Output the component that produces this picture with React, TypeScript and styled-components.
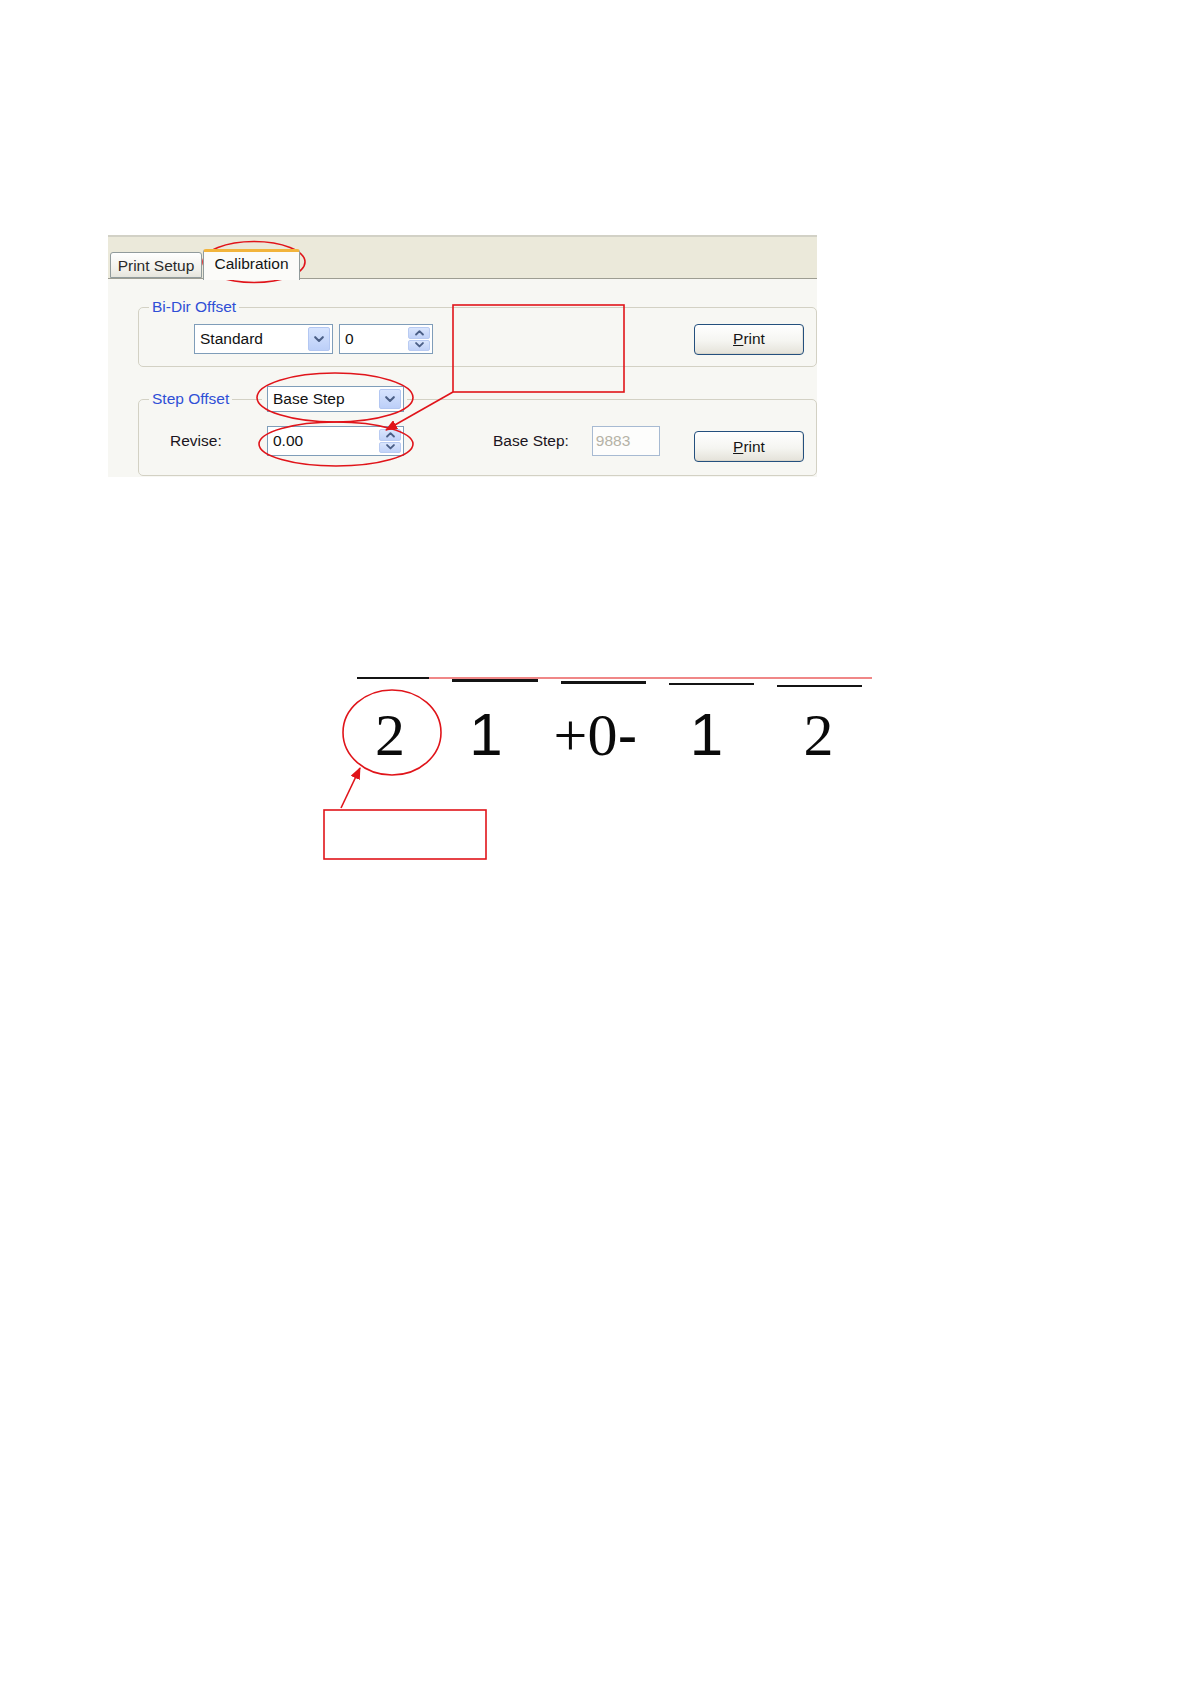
import React from "react";
import styled, { createGlobalStyle } from "styled-components";

const Global = createGlobalStyle`
  html, body { margin: 0; padding: 0; background: #ffffff; }
  body { font-family: "Liberation Sans", Arial, sans-serif; }
`;

const Page = styled.div`
  position: relative;
  width: 1191px;
  height: 1684px;
  box-sizing: border-box;
  padding-top: 235px;
  background: #ffffff;
  overflow: hidden;
`;

/* ---------- dialog screenshot ---------- */

const Window = styled.div`
  margin-left: 108px;
  width: 709px;
  background: #f7f7f3;
  font-family: "Liberation Sans", Arial, sans-serif;
  font-size: 15.5px;
  color: #151515;
`;

const TabStrip = styled.div`
  display: flex;
  align-items: flex-end;
  height: 41px;
  padding-left: 2px;
  background: #ebe9da;
  border-top: 2px solid #d2d1c6;
  border-bottom: 1px solid #9d9d92;
`;

const Tab = styled.div<{ $active?: boolean }>`
  position: relative;
  z-index: ${(p) => (p.$active ? 1 : 0)};
  box-sizing: border-box;
  display: flex;
  align-items: center;
  justify-content: center;
  width: ${(p) => (p.$active ? 97 : 92)}px;
  height: ${(p) => (p.$active ? 31 : 26)}px;
  margin-left: ${(p) => (p.$active ? 1 : 0)}px;
  margin-bottom: ${(p) => (p.$active ? -2 : 0)}px;
  padding-top: ${(p) => (p.$active ? 0 : 1)}px;
  padding-bottom: ${(p) => (p.$active ? 4 : 0)}px;
  border: 1px solid #919b9c;
  border-top: ${(p) => (p.$active ? "3px solid #f2b43c" : "1px solid #919b9c")};
  border-bottom: ${(p) => (p.$active ? "none" : "1px solid #919b9c")};
  border-radius: 3px 3px 0 0;
  background: ${(p) =>
    p.$active ? "#fbfbf9" : "linear-gradient(#ffffff, #f1f0ea 70%, #e6e5dc)"};
  color: ${(p) => (p.$active ? "#151515" : "#2a2a2a")};
  white-space: nowrap;
`;

const TabPage = styled.div`
  padding: 19px 0 1px 30px;
`;

const Group = styled.fieldset<{ $pt: number; $pb: number }>`
  margin: 0;
  min-width: 0;
  padding: ${(p) => p.$pt}px 0 ${(p) => p.$pb}px 0;
  border: 1px solid #d3d1c4;
  border-radius: 5px;
  & + & {
    margin-top: 19px;
  }
`;

const Legend = styled.legend`
  margin-left: 10px;
  padding: 0 3px;
  line-height: 18px;
`;

const LegendInner = styled.span`
  display: inline-flex;
  align-items: center;
  vertical-align: top;
`;

const LegendText = styled.span<{ $w?: number }>`
  color: #2f4fd6;
  display: inline-block;
  width: ${(p) => (p.$w ? `${p.$w}px` : "auto")};
  white-space: nowrap;
`;

const LegendRule = styled.span`
  display: inline-block;
  width: 30px;
  height: 1px;
  margin-right: 5px;
  background: #d3d1c4;
`;

const Row = styled.div<{ $indent: number; $h: number; $align: string }>`
  display: flex;
  align-items: ${(p) => p.$align};
  height: ${(p) => p.$h}px;
  padding-left: ${(p) => p.$indent}px;
`;

const Field = styled.div<{ $w: number; $h: number; $gap?: number }>`
  box-sizing: border-box;
  display: flex;
  align-items: center;
  flex: none;
  width: ${(p) => p.$w}px;
  height: ${(p) => p.$h}px;
  margin-left: ${(p) => p.$gap ?? 0}px;
  padding: 2px 2px 2px 5px;
  border: 1px solid #7f9db9;
  background: #ffffff;
  color: #111;
  line-height: 18px;
`;

const FieldText = styled.span`
  flex: 1;
  white-space: nowrap;
`;

const DropButton = styled.div`
  box-sizing: border-box;
  align-self: stretch;
  width: 22px;
  display: flex;
  align-items: center;
  justify-content: center;
  border: 1px solid #b3c7f2;
  border-radius: 2px;
  background: linear-gradient(#d7e4fe, #bccff8);
`;

const SpinButtons = styled.div`
  align-self: stretch;
  width: 22px;
  display: flex;
  flex-direction: column;
  gap: 1px;
`;

const SpinHalf = styled.div`
  flex: 1;
  display: flex;
  align-items: center;
  justify-content: center;
  border: 1px solid #b9cbf2;
  border-radius: 2px;
  background: linear-gradient(#d9e5fd, #c1d2f8);
`;

const Label = styled.span<{ $w?: number; $gap?: number }>`
  flex: none;
  width: ${(p) => (p.$w ? `${p.$w}px` : "auto")};
  margin-left: ${(p) => p.$gap ?? 0}px;
  line-height: 30px;
  color: #1a1420;
  white-space: nowrap;
`;

const ReadOnlyBox = styled.div<{ $gap: number }>`
  box-sizing: border-box;
  flex: none;
  width: 68px;
  height: 30px;
  margin-left: ${(p) => p.$gap}px;
  padding-left: 3px;
  display: flex;
  align-items: center;
  border: 1px solid #a7bad2;
  background: #fdfdfc;
  color: #b5b2a6;
`;

const PushButton = styled.button<{ $drop?: number }>`
  box-sizing: border-box;
  flex: none;
  width: 110px;
  height: 31px;
  margin: ${(p) => p.$drop ?? 0}px 12px 0 auto;
  padding: 0;
  border: 1px solid #24507e;
  border-radius: 4px;
  background: linear-gradient(#ffffff, #f5f5f1 55%, #e4e2d9);
  box-shadow: inset 0 -1px 0 #d9d6cb, inset -1px 0 0 #e6e3da;
  font: inherit;
  color: #151515;
`;

const Chevron = ({ up = false, size = 10 }: { up?: boolean; size?: number }) => (
  <svg width={size} height={size * 0.62} viewBox="0 0 10 6.2">
    <path
      d={up ? "M1.2 5 L5 1.3 L8.8 5" : "M1.2 1.2 L5 4.9 L8.8 1.2"}
      fill="none"
      stroke="#4b5f86"
      strokeWidth={2.1}
      strokeLinecap="round"
      strokeLinejoin="round"
    />
  </svg>
);

const Combo = ({ text, w, h, gap }: { text: string; w: number; h: number; gap?: number }) => (
  <Field $w={w} $h={h} $gap={gap}>
    <FieldText>{text}</FieldText>
    <DropButton>
      <Chevron />
    </DropButton>
  </Field>
);

const Spin = ({ text, w, h, gap }: { text: string; w: number; h: number; gap?: number }) => (
  <Field $w={w} $h={h} $gap={gap}>
    <FieldText>{text}</FieldText>
    <SpinButtons>
      <SpinHalf>
        <Chevron up size={9} />
      </SpinHalf>
      <SpinHalf>
        <Chevron size={9} />
      </SpinHalf>
    </SpinButtons>
  </Field>
);

/* ---------- scale figure ---------- */

const Figure = styled.div`
  position: relative;
  display: flex;
  gap: 23px;
  margin: 200px 0 0 357px;
`;

const RedRule = styled.div`
  position: absolute;
  left: 72px;
  top: 0;
  width: 443px;
  height: 2px;
  background: #f08787;
`;

const Column = styled.div<{ $w: number }>`
  width: ${(p) => p.$w}px;
  display: flex;
  flex-direction: column;
  align-items: center;
`;

const Segment = styled.div<{ $y: number; $t?: number }>`
  align-self: stretch;
  height: ${(p) => p.$t ?? 2}px;
  margin-top: ${(p) => p.$y}px;
  margin-bottom: ${(p) => 10 - p.$y - (p.$t ?? 2)}px;
  background: #141414;
`;

const Digit = styled.div<{ $shift: number }>`
  margin-top: 18px;
  margin-right: ${(p) => -2 * p.$shift}px;
  font-size: 60px;
  line-height: 60px;
  color: #0a0a0a;
  white-space: nowrap;
`;

const Serif = styled.span`
  font-family: "Liberation Serif", "Times New Roman", serif;
`;

const Sans = styled.span`
  font-family: "Liberation Sans", Arial, sans-serif;
`;

/* ---------- red annotations ---------- */

const Overlay = styled.svg`
  position: absolute;
  left: 0;
  top: 0;
  width: 1191px;
  height: 1684px;
  pointer-events: none;
`;

const RED = "#e0141a";

export default function App() {
  return (
    <>
      <Global />
      <Page>
        <Window>
          <TabStrip>
            <Tab>Print Setup</Tab>
            <Tab $active>Calibration</Tab>
          </TabStrip>
          <TabPage>
            <Group $pt={7} $pb={11}>
              <Legend>
                <LegendInner>
                  <LegendText>Bi-Dir Offset</LegendText>
                </LegendInner>
              </Legend>
              <Row $indent={55} $h={32} $align="center">
                <Combo text="Standard" w={139} h={30} />
                <Spin text="0" w={94} h={30} gap={6} />
                <PushButton>
                  <u>P</u>rint
                </PushButton>
              </Row>
            </Group>
            <Group $pt={14} $pb={13}>
              <Legend>
                <LegendInner>
                  <LegendText $w={80}>Step Offset</LegendText>
                  <LegendRule />
                  <Combo text="Base Step" w={137} h={26} />
                </LegendInner>
              </Legend>
              <Row $indent={31} $h={36} $align="flex-start">
                <Label $w={97}>Revise:</Label>
                <Spin text="0.00" w={137} h={30} />
                <Label $gap={89}>Base Step:</Label>
                <ReadOnlyBox $gap={23}>9883</ReadOnlyBox>
                <PushButton $drop={5}>
                  <u>P</u>rint
                </PushButton>
              </Row>
            </Group>
          </TabPage>
        </Window>

        <Figure>
          <RedRule />
          <Column $w={72}>
            <Segment $y={0} $t={1.5} />
            <Digit $shift={-3}>
              <Serif>2</Serif>
            </Digit>
          </Column>
          <Column $w={86}>
            <Segment $y={2} $t={2.5} />
            <Digit $shift={-9}>
              <Sans>1</Sans>
            </Digit>
          </Column>
          <Column $w={85}>
            <Segment $y={4} $t={2.5} />
            <Digit $shift={-8}>
              <Serif>+0</Serif>
              <Sans>-</Sans>
            </Digit>
          </Column>
          <Column $w={85}>
            <Segment $y={6} $t={1.5} />
            <Digit $shift={-5}>
              <Sans>1</Sans>
            </Digit>
          </Column>
          <Column $w={85}>
            <Segment $y={8} $t={2} />
            <Digit $shift={-1}>
              <Serif>2</Serif>
            </Digit>
          </Column>
        </Figure>

        <Overlay viewBox="0 0 1191 1684">
          <defs>
            <marker
              id="head"
              viewBox="0 0 12 10"
              refX="11"
              refY="5"
              markerWidth="12"
              markerHeight="10"
              markerUnits="userSpaceOnUse"
              orient="auto"
            >
              <path d="M0 0 L12 5 L0 10 Z" fill={RED} />
            </marker>
          </defs>
          <g fill="none" stroke={RED} strokeWidth={1.6}>
            <ellipse cx={254} cy={262} rx={51} ry={20.5} />
            <ellipse cx={335} cy={397.5} rx={78} ry={24.5} />
            <ellipse cx={336} cy={444} rx={77} ry={22} />
            <rect x={453} y={305} width={171} height={87} />
            <line x1={453} y1={392} x2={386} y2={430} markerEnd="url(#head)" />
            <ellipse cx={392} cy={732.5} rx={49} ry={42.5} />
            <line x1={341} y1={808} x2={360} y2={768} markerEnd="url(#head)" />
            <rect x={324} y={810} width={162} height={49} />
          </g>
        </Overlay>
      </Page>
    </>
  );
}
